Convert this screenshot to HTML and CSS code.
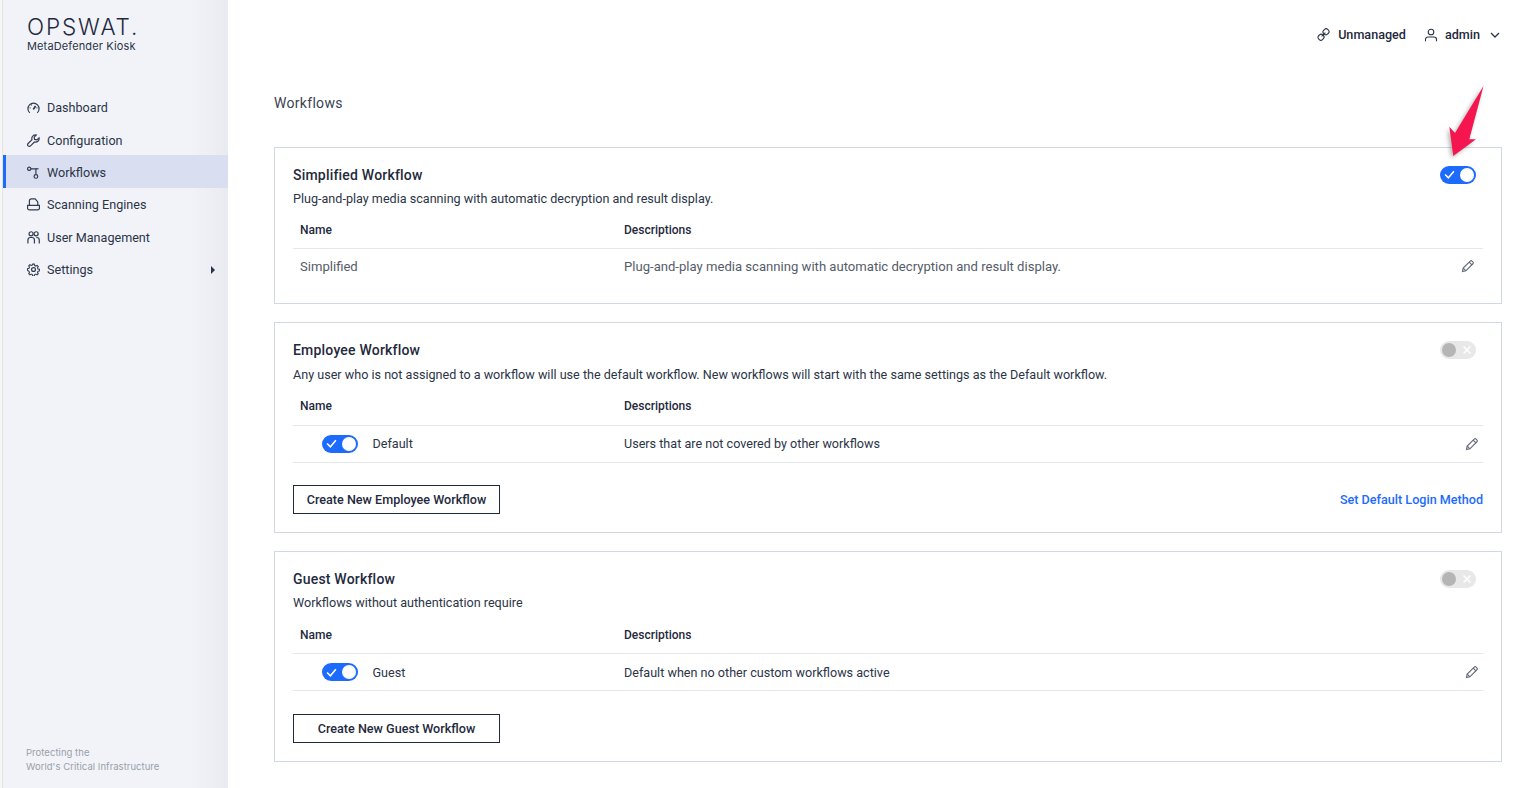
FILE: index.html
```html
<!DOCTYPE html>
<html lang="en">
<head>
<meta charset="utf-8">
<title>Workflows - MetaDefender Kiosk</title>
<link rel="stylesheet" href="styles.css">
</head>
<body>
<div class="app">
  <aside class="sidebar">
    <div class="brand">
      <div class="logo">OPSWAT.</div>
      <div class="product">MetaDefender Kiosk</div>
    </div>
    <nav class="nav">
      <a class="nav-item">
        <svg class="nav-icon" viewBox="0 0 14 14"><path d="M3 12.800A6 6 0 1 1 11 12.800"/><path d="M6.800 9.200 9.200 5.400" stroke-width="1.800"/><path d="M2.800 7.400h1M10.200 7.400h1M4.400 4l.7.8"/></svg>
        <span>Dashboard</span>
      </a>
      <a class="nav-item">
        <svg class="nav-icon" viewBox="0 0 14 14"><path d="M8.800 1a3.800 3.800 0 0 0-3.400 5L1.200 10.200a1.800 1.800 0 0 0 2.600 2.600L8 8.600a3.800 3.800 0 0 0 5-4.400L10.600 6.400 8.200 5.800 7.700 3.400 10 1.200A3.800 3.800 0 0 0 8.800 1Z"/></svg>
        <span>Configuration</span>
      </a>
      <a class="nav-item active">
        <svg class="nav-icon" viewBox="0 0 14 14"><circle cx="2.400" cy="3" r="1.800"/><circle cx="9.600" cy="11.200" r="2"/><path d="M4.200 3h5.400v6.200"/><path d="M9.600 3h2.800"/></svg>
        <span>Workflows</span>
      </a>
      <a class="nav-item">
        <svg class="nav-icon" viewBox="0 0 14 14"><path d="M2.600 8V3a2 2 0 0 1 2-2h4.200l2.800 3.200V8"/><path d="M.6 8h12.800v2.800a2 2 0 0 1-2 2H2.600a2 2 0 0 1-2-2Z"/></svg>
        <span>Scanning Engines</span>
      </a>
      <a class="nav-item">
        <svg class="nav-icon" viewBox="0 0 14 14"><circle cx="4.400" cy="3" r="2.200"/><circle cx="9.800" cy="3" r="2.200"/><path d="M1 13.400V9.600A2.600 2.600 0 0 1 3.600 7h1.800A2.600 2.600 0 0 1 8 9.600v3.800"/><path d="M10 7h.6a2.600 2.600 0 0 1 2.600 2.600v3.800"/></svg>
        <span>User Management</span>
      </a>
      <a class="nav-item">
        <svg class="nav-icon" viewBox="0 0 14 14"><circle cx="7" cy="7" r="2.100"/><path d="M6 .6h2l.4 1.700 1.400.6 1.500-.9 1.400 1.400-.9 1.500.6 1.400 1.700.4v2l-1.700.4-.6 1.400.9 1.500-1.400 1.400-1.500-.9-1.400.6-.4 1.700H6l-.4-1.700-1.400-.6-1.500.9-1.400-1.400.9-1.500-.6-1.400L-.1 8V6l1.700-.4.600-1.400-.9-1.500 1.400-1.400 1.500.9 1.400-.6Z" transform="translate(.7 .7) scale(.9)"/></svg>
        <span>Settings</span>
        <i class="caret"></i>
      </a>
    </nav>
    <div class="tagline">Protecting the<br>World's Critical Infrastructure</div>
  </aside>

  <main class="main">
    <header class="topbar">
      <svg class="top-icon" viewBox="0 0 14 14"><rect x="6.600" y="1.200" width="6.200" height="5.800" rx="2.400" transform="rotate(-45 9.700 4.100)"/><rect x="1.200" y="7" width="6.200" height="5.800" rx="2.400" transform="rotate(-45 4.300 9.900)"/><path d="M5 9 9 5"/></svg>
      <span class="top-text">Unmanaged</span>
      <svg class="user-icon" viewBox="0 0 14 14"><circle cx="7" cy="4" r="2.800"/><path d="M1.500 13.200v-1.700A2.500 2.500 0 0 1 4 9h6a2.500 2.500 0 0 1 2.500 2.500v1.700"/></svg>
      <span class="top-text">admin</span>
      <svg class="chevron" viewBox="0 0 10 6"><path d="M1 1l4 4 4-4"/></svg>
    </header>

    <h1 class="page-title">Workflows</h1>

    <section class="card card-simple">
      <div class="card-head">
        <h2 class="card-title">Simplified Workflow</h2>
        <span class="toggle on head-toggle"><svg viewBox="0 0 10 8"><path d="M1 4l3 3 5-6"/></svg><i></i></span>
      </div>
      <p class="card-desc">Plug-and-play media scanning with automatic decryption and result display.</p>
      <div class="row head-row"><span class="cell">Name</span><span>Descriptions</span></div>
      <div class="row body-row plain">
        <span class="cell">Simplified</span>
        <span>Plug-and-play media scanning with automatic decryption and result display.</span>
        <svg class="edit edit-wide" viewBox="0 0 14 14"><path d="M1.500 12.500l.7-3.400 7-7a1.300 1.300 0 0 1 1.900 0l.8.8a1.300 1.300 0 0 1 0 1.900l-7 7Z"/><path d="M8.200 3.100l2.700 2.700M2.200 9.100l2.700 2.700"/></svg>
      </div>
    </section>

    <section class="card">
      <div class="card-head">
        <h2 class="card-title">Employee Workflow</h2>
        <span class="toggle off head-toggle"><i></i><svg viewBox="0.500 0.500 7 7"><path d="M1 1l6 6M7 1L1 7"/></svg></span>
      </div>
      <p class="card-desc">Any user who is not assigned to a workflow will use the default workflow. New workflows will start with the same settings as the Default workflow.</p>
      <div class="row head-row"><span class="cell">Name</span><span>Descriptions</span></div>
      <div class="row body-row">
        <span class="cell name-cell"><span class="toggle on"><svg viewBox="0 0 10 8"><path d="M1 4l3 3 5-6"/></svg><i></i></span>Default</span>
        <span>Users that are not covered by other workflows</span>
        <svg class="edit" viewBox="0 0 14 14"><path d="M1.500 12.500l.7-3.400 7-7a1.300 1.300 0 0 1 1.900 0l.8.8a1.300 1.300 0 0 1 0 1.900l-7 7Z"/><path d="M8.200 3.100l2.700 2.700M2.200 9.100l2.700 2.700"/></svg>
      </div>
      <div class="actions">
        <button class="btn">Create New Employee Workflow</button>
        <a class="link">Set Default Login Method</a>
      </div>
    </section>

    <section class="card">
      <div class="card-head">
        <h2 class="card-title">Guest Workflow</h2>
        <span class="toggle off head-toggle"><i></i><svg viewBox="0.500 0.500 7 7"><path d="M1 1l6 6M7 1L1 7"/></svg></span>
      </div>
      <p class="card-desc">Workflows without authentication require</p>
      <div class="row head-row"><span class="cell">Name</span><span>Descriptions</span></div>
      <div class="row body-row">
        <span class="cell name-cell"><span class="toggle on"><svg viewBox="0 0 10 8"><path d="M1 4l3 3 5-6"/></svg><i></i></span>Guest</span>
        <span>Default when no other custom workflows active</span>
        <svg class="edit" viewBox="0 0 14 14"><path d="M1.500 12.500l.7-3.400 7-7a1.300 1.300 0 0 1 1.900 0l.8.8a1.300 1.300 0 0 1 0 1.900l-7 7Z"/><path d="M8.200 3.100l2.700 2.700M2.200 9.100l2.700 2.700"/></svg>
      </div>
      <div class="actions">
        <button class="btn">Create New Guest Workflow</button>
      </div>
    </section>
  </main>
</div>
<svg class="arrow" viewBox="0 0 44 80"><polygon points="38.500,1 24.300,54.300 31,54.300 8.300,71 4.300,41.700 10,48"/></svg>
</body>
</html>
```
FILE: styles.css
```css
* { box-sizing: border-box; }
html, body { margin: 0; height: 100%; overflow: hidden; background: #fff; }
body { font-family: Roboto, "Liberation Sans", sans-serif; font-size: 12.6px; color: #1f2a3d; }
.app { display: flex; height: 788px; }

.sidebar {
  width: 228px; flex: none; display: flex; flex-direction: column;
  padding-left: 3px;
  background: linear-gradient(90deg, #f7f7f8 0, #f7f7f8 2px, #e2e4ea 2px, #e2e4ea 3px, #f1f3f9 3px, #f1f3f9 190px, #e9ebf0 228px);
}
.brand { height: 91.5px; padding: 13px 0 0 24px; }
.logo { font-family: Inter, sans-serif; font-weight: 300; font-size: 22.5px; line-height: 28px; letter-spacing: 1.9px; color: #1f2a3d; }
.product { font-family: Inter, sans-serif; font-size: 11px; line-height: 14px; letter-spacing: .13px; margin-top: -2px; color: #2b3547; }
.nav { display: flex; flex-direction: column; }
.nav-item { display: flex; align-items: center; height: 32.4px; padding-left: 24px; color: #2b3547; position: relative; }
.nav-item.active { background: #d9dff0; box-shadow: inset 3px 0 0 #1d6bfc; height: 32.6px; margin: -.9px 0 .8px; padding-top: .9px; }
.nav-icon { width: 13px; height: 13px; margin-right: 7px; fill: none; stroke: #333d4f; stroke-width: 1.300; flex: none; }
.caret { position: absolute; right: 13px; top: 12px; border-left: 4px solid #2b3547; border-top: 4px solid transparent; border-bottom: 4px solid transparent; }
.tagline { margin-top: auto; padding: 0 0 14px 23px; font-family: Inter, sans-serif; font-size: 9.500px; line-height: 14px; letter-spacing: .04px; color: #9a9fa9; }

.main { flex: 1; min-width: 0; padding: 0 38px 0 46px; }
.topbar { height: 69px; display: flex; align-items: center; justify-content: flex-end; color: #1f2a3d; padding-right: 2px; }
.top-text { font-weight: 500; }
.top-icon { width: 13px; height: 13px; margin-right: 8px; fill: none; stroke: #2b3547; stroke-width: 1.200; }
.user-icon { width: 14px; height: 14px; margin: 0 7px 0 18px; fill: none; stroke: #2b3547; stroke-width: 1.100; }
.chevron { width: 10px; height: 6px; margin-left: 10px; fill: none; stroke: #2b3547; stroke-width: 1.300; }
.page-title { margin: 0; height: 78px; padding-top: 25px; font-size: 14px; line-height: 18px; font-weight: 400; letter-spacing: .3px; color: #3a4354; }

.card { border: 1px solid #d3d8e6; padding: 17.9px 18px 17.8px; margin-bottom: 18px; }
.card-head { display: flex; align-items: center; justify-content: space-between; height: 18px; }
.card-title { margin: 0; font-size: 14px; line-height: 18px; font-weight: 500; letter-spacing: .2px; color: #1f2a3d; }
.card-desc { margin: 6.3px 0 0; line-height: 18px; color: #2b3547; }

.row { display: grid; grid-template-columns: 331px 1fr auto; align-items: center; height: 37px; }
.cell { padding-left: 7px; }
.head-row { margin-top: 3.3px; padding-top: 1px; font-weight: 500; font-size: 12px; height: 38.8px; border-bottom: 1px solid #e4e6ea; }
.card-simple .head-row { margin-top: 2.1px; }
.body-row { border-bottom: 1px solid #e4e6ea; color: #2b3547; }
.body-row.plain { border-bottom: 0; height: 36.5px; padding-bottom: 1.5px; font-size: 13.1px; color: #545c6a; }
.name-cell { display: flex; align-items: center; padding-left: 29px; gap: 14.5px; }

.toggle { width: 36px; height: 18px; border-radius: 9px; display: flex; align-items: center; justify-content: space-between; padding: 0 2px; flex: none; }
.toggle i { width: 14px; height: 14px; border-radius: 50%; display: block; }
.toggle svg { width: 11px; height: 9px; fill: none; stroke: #fff; stroke-width: 1.400; margin-left: 2px; }
.toggle.on { background: #1d6bfc; }
.toggle.on i { background: #fff; }
.toggle.off { background: #e8e8e8; }
.toggle.off i { background: #b5b5b5; }
.toggle.off svg { width: 8px; height: 8px; margin: 0 3px 0 0; stroke-width: 1.300; }
.head-toggle { margin-right: 7px; }

.edit { width: 14px; height: 14px; fill: none; stroke: #666c7b; stroke-width: 1.200; margin-right: 4px; }
.edit-wide { margin: -2px 8px 0 0; }

.actions { display: flex; align-items: center; justify-content: space-between; margin-top: 22.5px; }
.btn { width: 207px; height: 29px; padding: 0; background: #fff; border: 1px solid #1f2a3d; border-radius: 0; font-family: Roboto, sans-serif; font-size: 12.6px; font-weight: 500; color: #1f2a3d; }
.link { color: #1d6bfc; font-weight: 500; }

.arrow { position: absolute; left: 1445px; top: 85px; width: 44px; height: 80px; fill: #f5164f; filter: drop-shadow(-2px 2px 2px rgba(0,0,0,.3)); }
```
